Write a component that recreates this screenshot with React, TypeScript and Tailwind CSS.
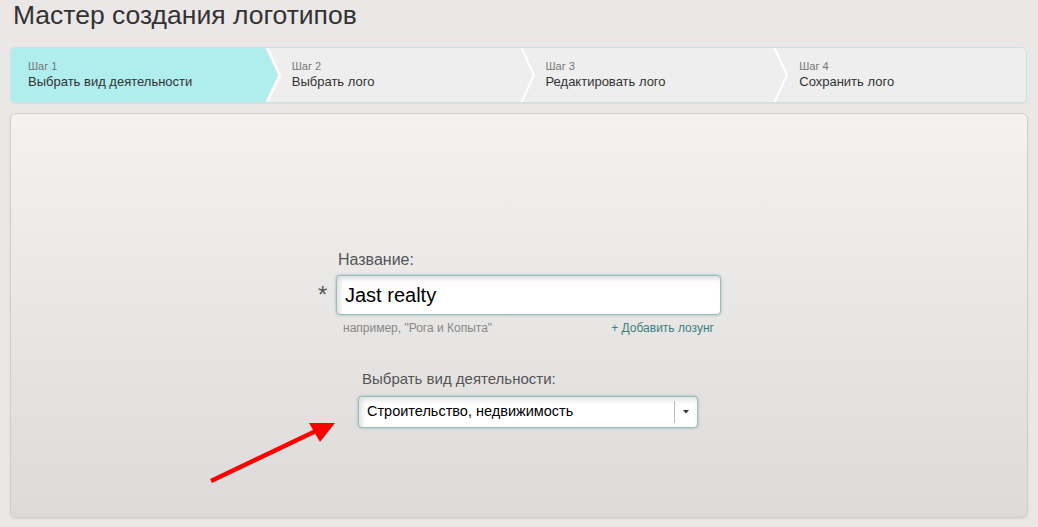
import React from "react";

const steps = [
  { n: "Шаг 1", t: "Выбрать вид деятельности" },
  { n: "Шаг 2", t: "Выбрать лого" },
  { n: "Шаг 3", t: "Редактировать лого" },
  { n: "Шаг 4", t: "Сохранить лого" },
];

function Chevron({ filled }: { filled: boolean }) {
  return (
    <svg
      className="absolute top-0 right-[-17px] z-10"
      width="17"
      height="54"
      viewBox="0 0 17 54"
    >
      {filled && <polygon points="0,0 13,27 0,54" fill="#b0eeee" />}
      <polyline
        points="2,-1 15,27 2,55"
        fill="none"
        stroke="#ffffff"
        strokeWidth="2"
      />
    </svg>
  );
}

export default function App() {
  return (
    <div
      className="relative min-h-[527px] bg-[#ebe7e7] text-[#333]"
      style={{ fontFamily: '"Liberation Sans", Arial, sans-serif' }}
    >
      <h1 className="pl-[13px] text-[26.5px] leading-[30px] text-[#333] mb-[17px]">
        Мастер создания логотипов
      </h1>

      <div className="ml-[10px] mr-[11px] h-[56px] grid grid-cols-4 rounded-[5px] border border-[#c6e3e5] bg-[#eeeeee] shadow-[0_1px_1px_rgba(0,0,0,0.05)]">
        {steps.map((s, i) => (
          <div
            key={i}
            className={
              "relative flex flex-col pt-[11px] " +
              (i === 0
                ? "bg-[#b0eeee] rounded-l-[4px] pl-[17px]"
                : "pl-[27px]")
            }
          >
            <div className="text-[11px] leading-[14px] text-[#777]">{s.n}</div>
            <div className="text-[13px] leading-[16px] text-[#333] mt-[1px]">
              {s.t}
            </div>
            {i < 3 && <Chevron filled={i === 0} />}
          </div>
        ))}
      </div>

      <div className="mt-[10px] mx-[10px] h-[405px] rounded-[6px] border border-[#d2cdcd] bg-gradient-to-b from-[#f3f2f1] to-[#dcdbda] shadow-[0_1px_2px_rgba(0,0,0,0.08)] pt-[136px] pl-[307px]">
        <div className="pl-[20px] text-[16px] leading-[20px] text-[#555]">
          Название:
        </div>
        <div className="flex items-start mt-[5px]">
          <span className="w-[18px] text-[24px] leading-[32px] text-[#555] pt-[4px]">
            *
          </span>
          <div className="w-[385px] h-[40px] rounded-[4px] border border-[#9cbcbc] bg-white shadow-[inset_3px_3px_5px_rgba(0,0,0,0.13),0_0_3px_rgba(70,150,150,0.55)] flex items-center pl-[8px] text-[20px] text-black">
            Jast realty
          </div>
        </div>
        <div className="flex justify-between w-[371px] ml-[25px] mt-[5px] text-[12px] leading-[16px]">
          <span className="text-[#888]">например, "Рога и Копыта"</span>
          <span className="text-[#3b7f7f]">+ Добавить лозунг</span>
        </div>

        <div className="ml-[44px] mt-[34px] text-[15px] leading-[18px] text-[#555]">
          Выбрать вид деятельности:
        </div>
        <div className="ml-[40px] mt-[8px] w-[340px] h-[32px] rounded-[4px] border border-[#9cbcbc] bg-white shadow-[inset_3px_3px_5px_rgba(0,0,0,0.12),0_0_3px_rgba(70,150,150,0.55)] flex items-center">
          <span className="flex-1 pl-[8px] text-[14.5px] text-black">
            Строительство, недвижимость
          </span>
          <span className="w-px h-[22px] bg-[#bbb]" />
          <span className="w-[22px] flex justify-center">
            <svg width="6" height="4" viewBox="0 0 6 4">
              <polygon points="0,0 6,0 3,3.5" fill="#333" />
            </svg>
          </span>
        </div>
      </div>

      <svg
        className="absolute left-0 top-0 pointer-events-none"
        width="1038"
        height="527"
      >
        <line
          x1="211"
          y1="481"
          x2="318"
          y2="430"
          stroke="#ff0000"
          strokeWidth="4.5"
        />
        <polygon points="309,423 335,423 320,442" fill="#ff0000" />
      </svg>
    </div>
  );
}
